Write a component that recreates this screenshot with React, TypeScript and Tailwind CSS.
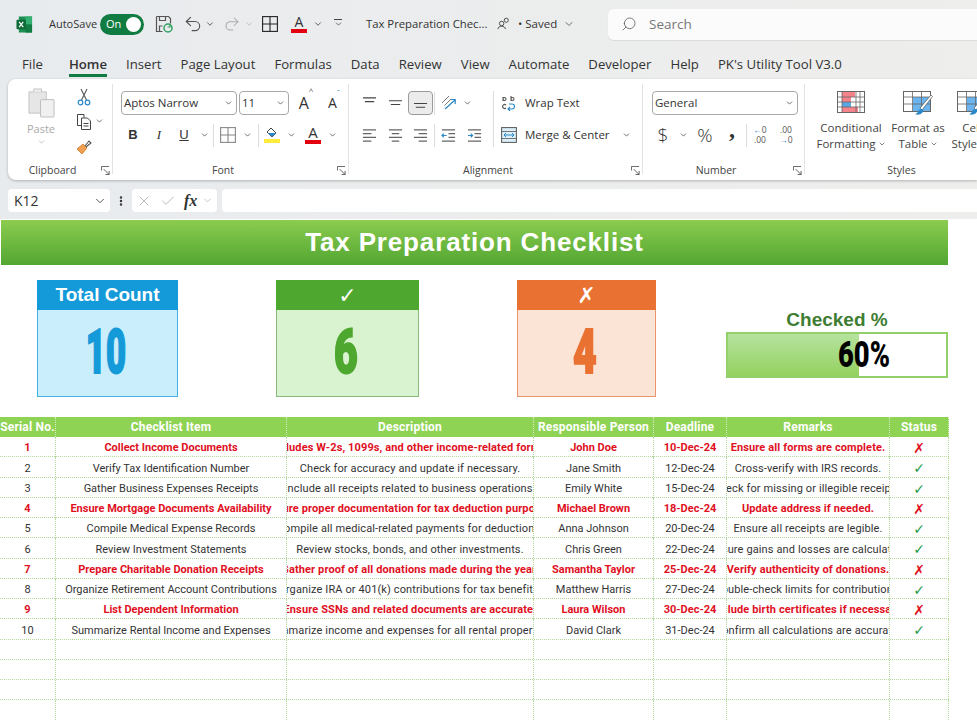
import {
  ChevronDown,
  Redo2,
  Search,
  Undo2,
  Check,
  X,
  Ellipsis,
} from "lucide-react";

const rows = [
  ["1", "Collect Income Documents", "Includes W-2s, 1099s, and other income-related forms.", "John Doe", "10-Dec-24", "Ensure all forms are complete.", "x"],
  ["2", "Verify Tax Identification Number", "Check for accuracy and update if necessary.", "Jane Smith", "12-Dec-24", "Cross-verify with IRS records.", "c"],
  ["3", "Gather Business Expenses Receipts", "Include all receipts related to business operations.", "Emily White", "15-Dec-24", "Check for missing or illegible receipts.", "c"],
  ["4", "Ensure Mortgage Documents Availability", "Ensure proper documentation for tax deduction purposes.", "Michael Brown", "18-Dec-24", "Update address if needed.", "x"],
  ["5", "Compile Medical Expense Records", "Compile all medical-related payments for deductions.", "Anna Johnson", "20-Dec-24", "Ensure all receipts are legible.", "c"],
  ["6", "Review Investment Statements", "Review stocks, bonds, and other investments.", "Chris Green", "22-Dec-24", "Ensure gains and losses are calculated.", "c"],
  ["7", "Prepare Charitable Donation Receipts", "Gather proof of all donations made during the year.", "Samantha Taylor", "25-Dec-24", "Verify authenticity of donations.", "x"],
  ["8", "Organize Retirement Account Contributions", "Organize IRA or 401(k) contributions for tax benefits.", "Matthew Harris", "27-Dec-24", "Double-check limits for contributions.", "c"],
  ["9", "List Dependent Information", "Ensure SSNs and related documents are accurate.", "Laura Wilson", "30-Dec-24", "Include birth certificates if necessary.", "x"],
  ["10", "Summarize Rental Income and Expenses", "Summarize income and expenses for all rental properties.", "David Clark", "31-Dec-24", "Confirm all calculations are accurate.", "c"],
];

const headers = ["Serial No.", "Checklist Item", "Description", "Responsible Person", "Deadline", "Remarks", "Status"];
const tabs = ["Insert", "Page Layout", "Formulas", "Data", "Review", "View", "Automate", "Developer", "Help", "PK's Utility Tool V3.0"];
const gridCols = "grid grid-cols-[56px_231px_247px_120px_73px_163px_59px] w-[949px]";

function Chev({ className = "w-[10px]" }: { className?: string }) {
  return <ChevronDown className={`${className} h-[10px] text-[#444] shrink-0`} strokeWidth={2} />;
}

function ExcelLogo() {
  return (
    <svg viewBox="0 0 18 18" className="w-[17px] h-[17px]">
      <rect x="3" y="0.5" width="14" height="17" fill="#1d8f52" />
      <rect x="10" y="0.5" width="7" height="8.5" fill="#33b06f" />
      <rect x="10" y="9" width="7" height="8.5" fill="#107c41" />
      <rect x="0.5" y="4" width="10" height="10" rx="1" fill="#0e6b38" />
      <path d="M3.3 6.3 7.7 11.7M7.7 6.3 3.3 11.7" stroke="#fff" strokeWidth="1.3" />
    </svg>
  );
}

function SaveIcon() {
  return (
    <svg viewBox="0 0 18 18" className="w-[18px] h-[18px]" fill="none">
      <path d="M1.5 1.5h12l2 2v5M1.5 1.5v15h6" stroke="#555" strokeWidth="1.2" />
      <path d="M4.5 1.5v4h6v-4M4.5 16v-5h3" stroke="#555" strokeWidth="1.2" />
      <circle cx="13" cy="13" r="4" stroke="#2f9e5e" strokeWidth="1.5" />
      <path d="M15 9.5v2.5h-2.5" stroke="#2f9e5e" strokeWidth="1.2" />
    </svg>
  );
}

function BordersIcon({ color = "#333" }: { color?: string }) {
  return (
    <svg viewBox="0 0 16 16" className="w-[16px] h-[16px]" fill="none" stroke={color} strokeWidth="1.1">
      <rect x="0.6" y="0.6" width="14.8" height="14.8" />
      <path d="M8 .6v14.8M.6 8h14.8" />
    </svg>
  );
}

function ColorA({ bar = "#e3000f", size = "text-[15px]" }: { bar?: string; size?: string }) {
  return (
    <span className="flex flex-col items-center leading-none">
      <span className={`${size} font-['Open_Sans',sans-serif] text-[#333] leading-[13px]`}>A</span>
      <span className="w-[16px] h-[4px] mt-[1px]" style={{ background: bar }} />
    </span>
  );
}

function Launcher() {
  return (
    <svg viewBox="0 0 10 10" className="w-[9px] h-[9px] justify-self-end" fill="none" stroke="#555" strokeWidth="1">
      <path d="M.5 5V.5H9M9 9.5 3 3.5M9 5.5v4H5" />
    </svg>
  );
}

function Lines({ kind }: { kind: "top" | "mid" | "bot" | "left" | "center" | "right" | "out" | "in" }) {
  if (kind === "top" || kind === "mid" || kind === "bot") {
    const y = kind === "top" ? 2 : kind === "mid" ? 5 : 8;
    return (
      <svg viewBox="0 0 16 16" className="w-[15px] h-[15px]" stroke="#444" strokeWidth="1.1">
        <path d={`M1 ${y}h14M3 ${y + 4}h10`} />
      </svg>
    );
  }
  const sets = {
    left: "M1 2h14M1 6h9M1 10h14M1 14h9",
    center: "M1 2h14M4 6h8M1 10h14M4 14h8",
    right: "M1 2h14M6 6h9M1 10h14M6 14h9",
    out: "M1 2h14M8 6h7M8 10h7M1 14h14",
    in: "M1 2h14M8 6h7M8 10h7M1 14h14",
  };
  return (
    <svg viewBox="0 0 16 16" className="w-[15px] h-[15px]" fill="none" strokeWidth="1.2">
      <path d={sets[kind]} stroke="#666" />
      {kind === "out" && <path d="M6 8H1M3 6 1 8l2 2" stroke="#2b88c8" />}
      {kind === "in" && <path d="M1 8h5M4 6l2 2-2 2" stroke="#2b88c8" />}
    </svg>
  );
}

function Group({ label, width, launcher = true, children }: { label: string; width: string; launcher?: boolean; children: React.ReactNode }) {
  return (
    <section className={`${width} h-[90px] my-[5px] shrink-0 border-r border-[#e3e3e3]`}>
      <div className="h-[79px]">{children}</div>
      <div className="grid grid-cols-[1fr_auto_1fr] items-center h-[14px] pr-[2px] text-[10.5px] leading-[14px] text-[#444]">
        <span />
        <span className={launcher ? "mr-[13px]" : ""}>{label}</span>
        {launcher ? <Launcher /> : <span />}
      </div>
    </section>
  );
}

function Select({ value, width }: { value: string; width: string }) {
  return (
    <div className={`${width} h-[24px] flex items-center justify-between pl-[2px] pr-[3px] rounded-[4px] border border-[#a8a8a8] bg-white text-[11.5px] text-[#333]`}>
      <span>{value}</span>
      <Chev className="w-[9px]" />
    </div>
  );
}

function Ribbon() {
  return (
    <div className="ml-[8px] h-[101px] flex rounded-l-[8px] bg-white shadow-[0_1px_3px_rgba(0,0,0,0.25)] font-['Open_Sans',sans-serif] overflow-hidden">
      <Group label="Clipboard" width="w-[105px]">
        <div className="flex">
          <div className="w-[66px] flex flex-col items-center pt-[3px]">
            <svg viewBox="0 0 30 32" className="w-[29px] h-[31px]" fill="none">
              <path d="M2 5h18v22H2z" fill="#e6e6e6" stroke="#c4c4c4" />
              <path d="M7 5V2h8v3" stroke="#c4c4c4" fill="#eee" />
              <rect x="14" y="13" width="14" height="18" rx="1" fill="#f0f0f0" stroke="#bdbdbd" />
            </svg>
            <span className="text-[11px] leading-[14px] mt-[4px] text-[#aaa]">Paste</span>
            <Chev className="w-[9px] opacity-40 mt-[1px]" />
          </div>
          <div className="flex flex-col w-[36px]">
            <span className="h-[24px] w-[20px] flex items-center justify-center pt-[1px]">
              <svg viewBox="0 0 14 18" className="w-[14px] h-[18px]" fill="none">
                <path d="M4 1 9.500 12M10 1 4.500 12" stroke="#555" strokeWidth="1.1" />
                <circle cx="3.500" cy="14.500" r="2.300" stroke="#2b88c8" strokeWidth="1.2" />
                <circle cx="10.500" cy="14.500" r="2.300" stroke="#2b88c8" strokeWidth="1.2" />
              </svg>
            </span>
            <span className="h-[26px] flex items-center">
              <span className="w-[20px] flex justify-center">
                <svg viewBox="0 0 16 17" className="w-[16px] h-[17px]" fill="none" stroke="#444" strokeWidth="1">
                  <path d="M5 12.500H1.500v-11H8v3" />
                  <path d="M5.500 5h6l3 3v8.500h-9zM7.500 10.500h5M7.500 13h5" />
                </svg>
              </span>
              <Chev className="w-[9px] ml-[1px]" />
            </span>
            <span className="h-[25px] w-[20px] flex items-center justify-center">
              <svg viewBox="0 0 16 16" className="w-[16px] h-[16px]" fill="none">
                <path d="M1 10 7 5l4 4-5 6z" fill="#f0a050" stroke="#c97a2a" strokeWidth=".8" />
                <path d="m9 7 4-5 2 2-5 4" stroke="#555" strokeWidth="1.1" />
              </svg>
            </span>
          </div>
        </div>
      </Group>

      <Group label="Font" width="w-[236px]">
        <div className="pt-[7px] pl-[8px]">
          <div className="flex items-center gap-[2px]">
            <Select value="Aptos Narrow" width="w-[116px]" />
            <Select value="11" width="w-[50px]" />
            <span className="w-[28px] ml-[1px] flex justify-center text-[16px] leading-none text-[#333]">A<sup className="text-[8px] text-[#555]">^</sup></span>
            <span className="w-[24px] flex justify-center text-[14px] leading-none text-[#333]">A<sup className="text-[8px] text-[#2b88c8]">ˇ</sup></span>
          </div>
          <div className="flex items-center h-[24px] mt-[8px] text-[#333]">
            <span className="w-[24px] text-center text-[13px] font-bold font-['Liberation_Sans',sans-serif]">B</span>
            <span className="w-[28px] text-center text-[13px] italic font-['Liberation_Serif',serif]">I</span>
            <span className="w-[22px] text-center text-[13px] underline font-['Liberation_Sans',sans-serif]">U</span>
            <span className="w-[18px] flex justify-center"><Chev className="w-[9px]" /></span>
            <span className="w-[1px] h-[23px] bg-[#ddd]" />
            <span className="w-[28px] flex justify-center"><BordersIcon color="#888" /></span>
            <span className="w-[10px] flex justify-center"><Chev className="w-[9px]" /></span>
            <span className="w-[12px] flex justify-center"><span className="w-[1px] h-[23px] bg-[#ddd]" /></span>
            <span className="w-[16px] flex flex-col items-center">
              <svg viewBox="0 0 14 12" className="w-[14px] h-[12px]" fill="none">
                <path d="m6 1 5 5-4 4-5-5z" stroke="#444" strokeWidth="1" />
                <path d="m3 6 8 0-4 4z" fill="#2b88c8" />
              </svg>
              <span className="w-[16px] h-[4px] bg-[#ffec3d]" />
            </span>
            <span className="w-[22px] flex justify-center"><Chev className="w-[9px]" /></span>
            <span className="w-[22px] flex justify-center"><ColorA /></span>
            <span className="w-[16px] flex justify-center"><Chev className="w-[9px]" /></span>
          </div>
        </div>
      </Group>

      <Group label="Alignment" width="w-[294px]">
        <div className="flex pt-[7px] pl-[7px]">
          <div className="w-[138px] border-r border-[#ddd] h-[56px]">
            <div className="flex items-center h-[24px]">
              <span className="w-[26px] flex justify-center"><Lines kind="top" /></span>
              <span className="w-[26px] flex justify-center"><Lines kind="mid" /></span>
              <span className="w-[25px] h-[24px] flex items-center justify-center rounded-[4px] border border-[#9a9a9a] bg-[#ececec]"><Lines kind="bot" /></span>
              <span className="w-[1px] h-[23px] ml-[1px] bg-[#ddd]" />
              <span className="w-[28px] flex justify-center">
                <svg viewBox="0 0 16 16" className="w-[16px] h-[16px]" fill="none">
                  <path d="M1 8 8 1M3.5 10.5 10 4" stroke="#777" strokeWidth="1" />
                  <path d="M4 14 14 5M10 4.5h4.2V9" stroke="#2b88c8" strokeWidth="1.2" />
                </svg>
              </span>
              <Chev className="w-[9px]" />
            </div>
            <div className="flex items-center h-[24px] mt-[8px]">
              <span className="w-[26px] flex justify-center"><Lines kind="left" /></span>
              <span className="w-[26px] flex justify-center"><Lines kind="center" /></span>
              <span className="w-[25px] flex justify-center"><Lines kind="right" /></span>
              <span className="w-[1px] h-[23px] ml-[1px] bg-[#ddd]" />
              <span className="w-[26px] flex justify-center"><Lines kind="out" /></span>
              <span className="w-[26px] flex justify-center"><Lines kind="in" /></span>
            </div>
          </div>
          <div className="pl-[7px] text-[11.5px] text-[#333]">
            <div className="flex items-center h-[24px]">
              <svg viewBox="0 0 16 16" className="w-[16px] h-[16px] mr-[8px]" fill="none" stroke="#2b88c8" strokeWidth="1.1">
                <path d="M8 9h3a2 2 0 0 1 0 5H7M9 12l-2 2 2 2" />
                <path d="M2 6V2M2 4a1.500 1.500 0 1 0 3 0 1.500 1.500 0 1 0-3 0M10 1v5M10 4a1.500 1.500 0 1 0 3 0 1.500 1.500 0 1 0-3 0M5 10a2 2 0 1 0 0 3" stroke="#555" />
              </svg>
              <span>Wrap Text</span>
            </div>
            <div className="flex items-center h-[24px] mt-[8px]">
              <span className="w-[24px]">
                <svg viewBox="0 0 16 16" className="w-[16px] h-[16px]" fill="none">
                  <rect x=".6" y=".6" width="14.8" height="14.8" fill="#dbeefa" stroke="#555" />
                  <path d="M.6 4.5h14.8M.6 11.5h14.8" stroke="#555" strokeWidth=".8" />
                  <path d="M3 8h10M5 6 3 8l2 2M11 6l2 2-2 2" stroke="#2b88c8" />
                </svg>
              </span>
              <span>Merge &amp; Center</span>
              <Chev className="w-[9px] ml-[12px]" />
            </div>
          </div>
        </div>
      </Group>

      <Group label="Number" width="w-[162px]">
        <div className="pt-[7px] pl-[9px]">
          <Select value="General" width="w-[146px]" />
          <div className="flex items-center h-[24px] mt-[8px] text-[#333]">
            <span className="w-[22px] text-center text-[19px] font-light">$</span>
            <span className="w-[18px] flex justify-center"><Chev className="w-[9px]" /></span>
            <span className="w-[26px] text-center text-[19px] font-light">%</span>
            <span className="w-[28px] text-center text-[24px] font-bold font-['Liberation_Serif',serif] leading-[16px] -translate-y-[6px]">,</span>
            <span className="w-[1px] h-[23px] bg-[#ddd]" />
            <span className="w-[26px] text-center text-[8.5px] leading-[10px] text-[#555]"><span className="text-[#2b88c8]">←</span>0<br />.00</span>
            <span className="w-[26px] text-center text-[8.5px] leading-[10px] text-[#555]">.00<br /><span className="text-[#2b88c8]">→</span>0</span>
          </div>
        </div>
      </Group>

      <Group label="Styles" width="w-[196px]" launcher={false}>
        <div className="flex pl-[6px] pt-[7px] text-[11.5px] leading-[16px] text-[#444] whitespace-nowrap">
          <div className="w-[80px] flex flex-col items-center">
            <svg viewBox="0 0 28 22" className="w-[28px] h-[22px]" fill="none">
              <rect x=".5" y=".5" width="27" height="21" fill="#fff" stroke="#666" />
              <path d="M5 1h13v5H5zM5 16h16v5H5z" fill="#f4838c" />
              <path d="M5 6h9v5H5z" fill="#f4838c" />
              <path d="M5 11h9v5H5z" fill="#5aa7e6" />
              <path d="M5 1v20M19 1v20M23 1v20M1 6h26M1 11h26M1 16h26" stroke="#666" strokeWidth=".8" />
            </svg>
            <span className="mt-[7px]">Conditional</span>
            <span className="flex items-center gap-[2px]">Formatting<Chev className="w-[8px]" /></span>
          </div>
          <div className="w-[54px] flex flex-col items-center">
            <TableIcon />
            <span className="mt-[5px]">Format as</span>
            <span className="flex items-center gap-[2px]">Table<Chev className="w-[8px]" /></span>
          </div>
          <div className="w-[44px] ml-[5px] flex flex-col items-center">
            <TableIcon />
            <span className="mt-[5px]">Cell</span>
            <span className="flex items-center gap-[2px]">Styles<Chev className="w-[8px]" /></span>
          </div>
        </div>
      </Group>
    </div>
  );
}

function TableIcon() {
  return (
    <svg viewBox="0 0 30 24" className="w-[30px] h-[24px]" fill="none">
      <rect x=".5" y=".5" width="27" height="20" fill="#fff" stroke="#666" />
      <path d="M10 6h17v14H10z" fill="#6cb4ee" />
      <path d="M9.500 1v20M18.500 1v20M1 6h26M1 13h26" stroke="#666" strokeWidth=".8" />
      <path d="m17 17 11-13 1.500 1.500L19 19z" fill="#fff" stroke="#555" strokeWidth=".7" />
      <path d="M12 23c3 0 3-5 6-5s3 2 1 4-5 2-7 1z" fill="#2b88c8" />
    </svg>
  );
}

function KpiCard({ title, value, width, header, digit, body, border, symbol }: { title: string; value: string; width: string; header: string; digit: string; body: string; border: string; symbol?: boolean }) {
  return (
    <div className={`${width} h-[117px] shrink-0 flex flex-col border ${border} ${body}`}>
      <div className={`h-[30px] -mx-[1px] -mt-[1px] flex items-center justify-center text-white font-bold ${header} ${symbol ? "font-['DejaVu_Sans',sans-serif] text-[22px]" : "font-['Liberation_Sans',sans-serif] text-[19px]"}`}>
        {title}
      </div>
      <div className={`flex-1 flex items-center justify-center pb-[2px] pr-[3px] font-['Roboto',sans-serif] font-black text-[62px] leading-none [-webkit-text-stroke:2px] ${digit}`}>
        <span className={value.length > 1 ? "scale-x-[0.56]" : "scale-x-[0.66]"}>{value}</span>
      </div>
    </div>
  );
}

export default function App() {
  return (
    <div className="w-[977px] h-[720px] overflow-hidden bg-white font-['Open_Sans',sans-serif]">
      <div className="bg-[linear-gradient(90deg,#e8ebee,#eeeeec)] h-[219px]">
        <div className="h-[45px] pt-[3px] flex items-center text-[#333]">
          <span className="ml-[16px] w-[33px]"><ExcelLogo /></span>
          <span className="text-[11px] w-[51px]">AutoSave</span>
          <span className="w-[44px] h-[21px] rounded-full bg-[#107c41] text-white text-[11px] flex items-center justify-between pl-[6px] pr-[3px]">
            On
            <span className="w-[15px] h-[15px] rounded-full bg-white" />
          </span>
          <span className="ml-[11px] w-[20px]"><SaveIcon /></span>
          <Undo2 className="ml-[8px] w-[20px] h-[20px] text-[#555]" strokeWidth={1.4} />
          <Chev className="ml-[2px] w-[10px]" />
          <Redo2 className="ml-[8px] w-[18px] h-[18px] text-[#aaa]" strokeWidth={1.4} />
          <Chev className="ml-[3px] w-[10px] opacity-30" />
          <span className="ml-[8px]"><BordersIcon color="#222" /></span>
          <span className="ml-[13px]"><ColorA size="text-[14px]" /></span>
          <Chev className="ml-[6px] w-[10px]" />
          <span className="ml-[10px] w-[10px] flex flex-col items-center">
            <span className="w-[8px] h-[1px] bg-[#444]" />
            <Chev className="w-[9px] -mt-[1px]" />
          </span>
          <span className="ml-[23px] w-[131px] text-[11.3px] whitespace-nowrap">Tax Preparation Chec...</span>
          <svg viewBox="0 0 14 14" className="w-[13px] h-[13px] mt-[-1px]" fill="none" stroke="#444" strokeWidth="1">
            <circle cx="5" cy="7" r="2.400" />
            <path d="M1 13c0-4 8-4 8 0" />
            <circle cx="10" cy="3.500" r="2.200" />
          </svg>
          <span className="ml-[8px] w-[45px] text-[11.5px] whitespace-nowrap">• Saved</span>
          <ChevronDown className="w-[12px] h-[12px] text-[#444]" strokeWidth={1.5} />
          <div className="ml-[33px] flex-1 h-[31px] flex items-center pl-[13px] rounded-l-[6px] bg-[#fbfbfb] shadow-[0_1px_1px_rgba(0,0,0,0.08)] text-[13.5px] text-[#777]">
            <Search className="w-[16px] h-[16px] -scale-x-100 text-[#666]" strokeWidth={1.3} />
            <span className="ml-[12px]">Search</span>
          </div>
        </div>

        <div className="h-[34px] pl-[22px] flex gap-[19px] text-[13.2px] text-[#333] whitespace-nowrap">
          <span className="h-[32px] pt-[9px] leading-[20px] mr-[7px]">File</span>
          <span className="h-[32px] pt-[9px] leading-[20px] font-semibold border-b-[3px] border-[#107c41]">Home</span>
          {tabs.map((t) => (
            <span key={t} className="h-[32px] pt-[9px] leading-[20px]">{t}</span>
          ))}
        </div>

        <Ribbon />

        <div className="mt-[9px] h-[23px] flex items-stretch text-[14px] text-[#333]">
          <div className="ml-[8px] w-[102px] flex items-center justify-between pl-[6px] pr-[3px] rounded-[4px] bg-white">
            K12
            <ChevronDown className="w-[14px] h-[14px]" strokeWidth={1.4} />
          </div>
          <span className="w-[22px] flex items-center justify-center">
            <Ellipsis className="w-[12px] h-[12px] rotate-90 text-[#333]" strokeWidth={3} />
          </span>
          <div className="w-[85px] flex items-center pl-[4px] rounded-[4px] bg-white text-[#aaa]">
            <X className="w-[16px] h-[16px]" strokeWidth={1.2} />
            <Check className="ml-[8px] w-[16px] h-[16px]" strokeWidth={1.2} />
            <span className="ml-[8px] w-[16px] font-['Liberation_Serif',serif] italic font-bold text-[16px] text-[#333]">fx</span>
            <ChevronDown className="ml-[2px] w-[11px] h-[11px]" strokeWidth={1.4} />
          </div>
          <div className="ml-[5px] flex-1 rounded-l-[4px] bg-white" />
        </div>
      </div>

      <div className="pt-[1px]">
        <div className="ml-[1px] w-[947px] h-[45px] flex items-center justify-center bg-[linear-gradient(180deg,#8ccc4f,#52a632)] text-white font-['Liberation_Sans',sans-serif] font-bold text-[26px] tracking-[0.85px]">
          Tax Preparation Checklist
        </div>

        <div className="flex mt-[15px] ml-[37px]">
          <KpiCard title="Total Count" value="10" width="w-[141px]" header="bg-[#149ad8]" digit="text-[#149ad8]" body="bg-[#caeefb]" border="border-[#45b0e1]" />
          <div className="w-[98px]" />
          <KpiCard title="✓" value="6" width="w-[143px]" header="bg-[#4ea72e]" digit="text-[#4ea72e]" body="bg-[#d9f2d0]" border="border-[#86b97a]" symbol />
          <div className="w-[98px]" />
          <KpiCard title="✗" value="4" width="w-[139px]" header="bg-[#e97132]" digit="text-[#e97132]" body="bg-[#fbe3d6]" border="border-[#e8946c]" symbol />
          <div className="w-[70px]" />
          <div className="w-[222px] h-[117px] flex flex-col items-center">
            <span className="mt-[27px] h-[25px] text-[19px] leading-[25px] font-bold text-[#3f7d33] font-['Liberation_Sans',sans-serif]">Checked %</span>
            <div className="relative w-full h-[46px] border-2 border-[#93d06c] flex items-center">
              <div className="absolute left-0 top-0 bottom-0 w-[60%] bg-[linear-gradient(180deg,#b6e39f,#93d15f)]" />
              <span className="relative ml-[96px] w-[80px] text-center scale-x-[0.76] font-['Roboto',sans-serif] font-black text-[36px] leading-none text-black">60%</span>
            </div>
          </div>
        </div>

        <div className="mt-[20px] font-['Roboto',sans-serif] text-[11px]">
          <div className={`${gridCols} h-[20px] bg-[#8fd355] text-white font-bold text-[12px] tracking-[0.2px]`}>
            {headers.map((h) => (
              <div key={h} className="flex items-center justify-center overflow-hidden whitespace-nowrap border-r border-dotted border-[#d7eec4]">{h}</div>
            ))}
          </div>
          {rows.map((r) => {
            const bad = r[6] === "x";
            return (
              <div key={r[0]} className={`${gridCols} h-[20.25px] border-b border-dotted border-[#b5d99c] ${bad ? "text-[#e0101e] font-bold" : "text-[#333]"}`}>
                {r.slice(0, 6).map((c, i) => (
                  <div key={i} className={`flex items-center justify-center pt-[1px] overflow-hidden whitespace-nowrap border-r border-dotted border-[#b5d99c] ${i === 2 || i === 5 ? "tracking-[0.12px]" : ""}`}>
                    <span className="shrink-0">{c}</span>
                  </div>
                ))}
                <div className={`flex items-center justify-center pt-[1px] border-r border-dotted border-[#b5d99c] font-['DejaVu_Sans',sans-serif] text-[14px] font-bold ${bad ? "text-[#e0101e]" : "text-[#1f9d4d]"}`}>
                  {bad ? "✗" : "✓"}
                </div>
              </div>
            );
          })}
          {[0, 1, 2, 3].map((n) => (
            <div key={n} className={`${gridCols} h-[20.25px] border-b border-dotted border-[#b5d99c]`}>
              {headers.map((h) => (
                <div key={h} className="border-r border-dotted border-[#b5d99c]" />
              ))}
            </div>
          ))}
        </div>
      </div>
    </div>
  );
}
